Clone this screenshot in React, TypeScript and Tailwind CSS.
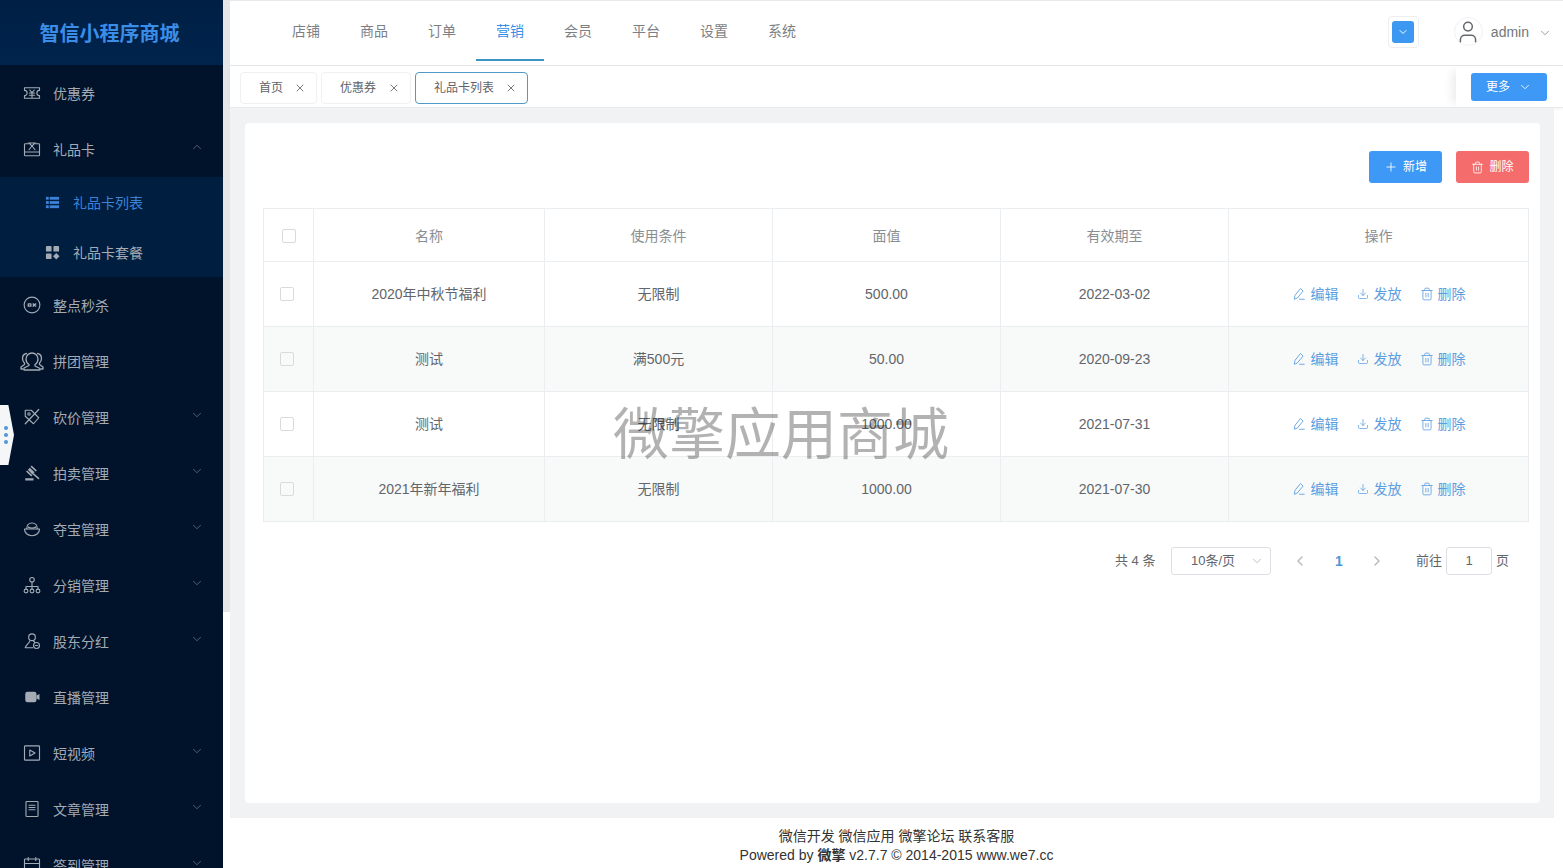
import React from 'react';
import { ChevronDown, ChevronUp, ChevronLeft, ChevronRight, X, Plus, Trash2, Download, User } from 'lucide-react';

type IconProps = { className?: string };

const base = {
  viewBox: '0 0 24 24',
  fill: 'none',
  stroke: 'currentColor',
  strokeWidth: 1.5,
  strokeLinecap: 'round' as const,
  strokeLinejoin: 'round' as const,
};

const CouponIcon = ({ className }: IconProps) => (
  <svg {...base} className={className}>
    <path d="M2 5h20v3.5a3.5 3.5 0 0 0 0 7V19H2v-3.5a3.5 3.5 0 0 0 0-7z" />
    <path d="M9 8l3 3.5L15 8M8.5 12h7M8.5 15h7M12 11.5V18" />
  </svg>
);
const GiftCardIcon = ({ className }: IconProps) => (
  <svg {...base} className={className}>
    <path d="M7 5H3a1 1 0 0 0-1 1v14a1 1 0 0 0 1 1h18a1 1 0 0 0 1-1V6a1 1 0 0 0-1-1h-4" />
    <path d="M2 16h20M7 4h10M8 4l4 4 4-4M12 8l-4 5M12 8l4 5" />
  </svg>
);
const ListIcon = ({ className }: IconProps) => (
  <svg viewBox="0 0 16 16" fill="currentColor" className={className}>
    <rect x="1" y="2" width="3" height="3" />
    <rect x="5" y="2" width="10" height="3" />
    <rect x="1" y="6.5" width="3" height="3" />
    <rect x="5" y="6.5" width="10" height="3" />
    <rect x="1" y="11" width="3" height="3" />
    <rect x="5" y="11" width="10" height="3" />
  </svg>
);
const PackageIcon = ({ className }: IconProps) => (
  <svg viewBox="0 0 16 16" fill="currentColor" className={className}>
    <rect x="1" y="1" width="6" height="6" rx="1" />
    <rect x="9" y="1" width="6" height="6" rx="1" />
    <rect x="1" y="9" width="6" height="6" rx="1" />
    <path d="M12 8.5l3.5 3.5-3.5 3.5L8.5 12z" />
  </svg>
);
const SeckillIcon = ({ className }: IconProps) => (
  <svg {...base} className={className}>
    <circle cx="12" cy="12" r="10.5" />
    <path d="M7 10.5h3.5v3H7zM13.5 10.5l3.5 3M17 10.5l-3.5 3" strokeWidth={1.8} />
  </svg>
);
const GroupIcon = ({ className }: IconProps) => (
  <svg {...base} strokeWidth={1.3} className={className}>
    <path d="M9 15.5c-2-1.2-3-3.2-3-5.5 0-3.300 2.700-6 6-6s6 2.700 6 6c0 2.300-1 4.300-3 5.500v1.500l5 2.500v1.500H4V19l5-2.500z" />
    <path d="M6.500 4.500C4 5 2.500 7 2.500 9.500c0 2 .8 3.500 2 4.500v1.500L1 18v2h2M17.500 4.500c2.500.5 4 2.500 4 5 0 2-.8 3.500-2 4.500v1.500L23 18v2h-2" />
  </svg>
);
const BargainIcon = ({ className }: IconProps) => (
  <svg {...base} className={className}>
    <path d="M3 3h8l10 10-7 8L3 11z" />
    <circle cx="8" cy="8" r="1.600" />
    <path d="M21 2L3 21" strokeWidth={1.600} />
  </svg>
);
const AuctionIcon = ({ className }: IconProps) => (
  <svg viewBox="0 0 24 24" fill="currentColor" className={className}>
    <path d="M11.500 2l7 6.500-1.500 1.500-7-6.500zM9 5l6.500 6-3 3-6-6.500zM5.500 8.500l7 6.500-1.500 1.500-7-6.500z" />
    <path d="M14 12l8 7-1.200 1.500-8-7z" />
    <rect x="3" y="19" width="11" height="3" />
  </svg>
);
const TreasureIcon = ({ className }: IconProps) => (
  <svg {...base} className={className}>
    <path d="M2 12h20c0 5-4 9-10 9S2 17 2 12z" />
    <path d="M5 12c0-5 3-8 7-8s7 3 7 8" />
    <path d="M7 9.500c3 1.500 7 1.500 10 0" />
  </svg>
);
const DistributionIcon = ({ className }: IconProps) => (
  <svg {...base} className={className}>
    <circle cx="12" cy="5" r="3" />
    <circle cx="4" cy="20" r="2.500" />
    <circle cx="12" cy="20" r="2.500" />
    <circle cx="20" cy="20" r="2.500" />
    <path d="M12 8v9.500M4 17.500V14h16v3.500" />
  </svg>
);
const ShareholderIcon = ({ className }: IconProps) => (
  <svg {...base} className={className}>
    <circle cx="12" cy="7" r="4.500" />
    <path d="M9 12c-.5 3-5 5-6 9h10" />
    <path d="M14 12l2 2" />
    <circle cx="18" cy="18" r="4" />
    <path d="M16.500 18h3" />
  </svg>
);
const VideoIcon = ({ className }: IconProps) => (
  <svg viewBox="0 0 24 24" fill="currentColor" className={className}>
    <rect x="3" y="5" width="15" height="14" rx="3" />
    <path d="M18 10l4-2v8l-4-2z" />
  </svg>
);
const PlayBoxIcon = ({ className }: IconProps) => (
  <svg {...base} className={className}>
    <rect x="2" y="2.500" width="20" height="19" rx="1" />
    <path d="M9 8l7 4-7 4z" />
  </svg>
);
const ArticleIcon = ({ className }: IconProps) => (
  <svg {...base} className={className}>
    <rect x="4" y="2" width="16" height="20" rx="1" />
    <path d="M8 7h8M8 10h8M8 13h8" />
  </svg>
);
const CalendarIcon = ({ className }: IconProps) => (
  <svg {...base} className={className}>
    <rect x="2" y="4" width="20" height="18" rx="1" />
    <path d="M2 10h20M7 2v4M17 2v4" />
  </svg>
);
const EditIcon = ({ className }: IconProps) => (
  <svg {...base} className={className}>
    <path d="M15 3l4 4L9 19l-5 2 1-6z" />
    <path d="M13 21h8" />
  </svg>
);

const menu = [
  { label: '优惠券', icon: CouponIcon },
  { label: '礼品卡', icon: GiftCardIcon, open: true },
  { label: '整点秒杀', icon: SeckillIcon },
  { label: '拼团管理', icon: GroupIcon, big: true },
  { label: '砍价管理', icon: BargainIcon, arrow: true },
  { label: '拍卖管理', icon: AuctionIcon, arrow: true },
  { label: '夺宝管理', icon: TreasureIcon, arrow: true },
  { label: '分销管理', icon: DistributionIcon, arrow: true },
  { label: '股东分红', icon: ShareholderIcon, arrow: true },
  { label: '直播管理', icon: VideoIcon },
  { label: '短视频', icon: PlayBoxIcon, arrow: true },
  { label: '文章管理', icon: ArticleIcon, arrow: true },
  { label: '签到管理', icon: CalendarIcon, arrow: true },
];

const navs = ['店铺', '商品', '订单', '营销', '会员', '平台', '设置', '系统'];

const rows = [
  { name: '2020年中秋节福利', cond: '无限制', value: '500.00', date: '2022-03-02' },
  { name: '测试', cond: '满500元', value: '50.00', date: '2020-09-23' },
  { name: '测试', cond: '无限制', value: '1000.00', date: '2021-07-31' },
  { name: '2021年新年福利', cond: '无限制', value: '1000.00', date: '2021-07-30' },
];

function Sidebar() {
  return (
    <aside className="w-[223px] h-[868px] shrink-0 bg-[#00132b] overflow-hidden">
      <div className="h-[65px] bg-gradient-to-b from-[#001f44] to-[#00244d] flex items-center justify-center pr-1 pt-[2px] text-[20px] font-bold text-[#3b8ee8]">
        智信小程序商城
      </div>
      {menu.map((item) => {
        const Icon = item.icon;
        return (
          <div key={item.label}>
            <div className="h-14 flex items-center text-sm text-[#a4abb5]">
              <div className="w-[18px] ml-[23px] mr-3 flex justify-center shrink-0">
                <Icon className={item.big ? 'w-6 h-6 shrink-0' : 'w-[18px] h-[18px] shrink-0'} />
              </div>
              <span className="flex-1 pt-px">{item.label}</span>
              {item.arrow && <ChevronDown className="w-[14px] h-[14px] mr-[19px] mb-1 text-[#5f6a7a]" strokeWidth={1.5} />}
              {item.open && <ChevronUp className="w-[14px] h-[14px] mr-[19px] mb-1 text-[#5f6a7a]" strokeWidth={1.5} />}
            </div>
            {item.open && (
              <div className="bg-[#001f40] text-sm">
                <div className="h-[50px] flex items-center pl-[45px] gap-[13px] text-[#3b82d8]">
                  <ListIcon className="w-[15px] h-[15px]" />
                  <span className="pt-px">礼品卡列表</span>
                </div>
                <div className="h-[50px] flex items-center pl-[45px] gap-[13px] text-[#a4abb5]">
                  <PackageIcon className="w-[15px] h-[15px]" />
                  <span className="pt-px">礼品卡套餐</span>
                </div>
              </div>
            )}
          </div>
        );
      })}
    </aside>
  );
}

function TopBar() {
  return (
    <header className="h-[66px] border-t border-b border-[#e6e8ea] bg-white flex items-center">
      <nav className="flex pl-[42px] h-full flex-1">
        {navs.map((n) => (
          <div
            key={n}
            className={
              n === '营销'
                ? 'w-[68px] h-[60px] flex items-center justify-center pt-[2px] text-sm text-[#3a8ee6] border-b-2 border-[#3a94c4]'
                : 'w-[68px] h-[60px] flex items-center justify-center text-sm text-[#7c7f84]'
            }
          >
            {n}
          </div>
        ))}
      </nav>
      <div className="w-[31px] h-[32px] border border-[#eceef0] rounded flex items-center justify-center mr-[35px] mb-[3px]">
        <div className="w-[22px] h-[22px] rounded-[3px] bg-[#3d98f2] flex items-center justify-center">
          <ChevronDown className="w-3 h-3 text-white" />
        </div>
      </div>
      <div className="w-[29px] h-[29px] rounded-full border border-[#f0f1f2] flex items-center justify-center mb-[3px]">
        <User className="w-[26px] h-[26px] text-[#666a70]" strokeWidth={1.4} />
      </div>
      <span className="text-sm text-[#73777c] ml-2 mb-[2px]">admin</span>
      <ChevronDown className="w-[14px] h-[14px] text-[#8a8d91] ml-[9px] mr-[11px]" strokeWidth={1.5} />
    </header>
  );
}

function TabBar() {
  return (
    <div className="h-[42px] bg-white flex items-center border-b border-[#e8eaec] shadow-[0_1px_3px_rgba(0,0,0,0.06)]">
      <div className="flex-1 flex gap-1 pl-[10px] pt-[2px] text-xs text-[#5f6368]">
        <div className="w-[77px] h-8 border border-[#eef0f2] rounded flex items-center pl-[18px]">
          <span className="w-[35px]">首页</span>
          <X className="w-3 h-3 text-[#777b80]" />
        </div>
        <div className="w-[90px] h-8 border border-[#eef0f2] rounded flex items-center pl-[18px]">
          <span className="w-[48px]">优惠券</span>
          <X className="w-3 h-3 text-[#777b80]" />
        </div>
        <div className="w-[113px] h-8 border border-[#4f9ac7] rounded flex items-center pl-[18px]">
          <span className="w-[71px]">礼品卡列表</span>
          <X className="w-3 h-3 text-[#777b80]" />
        </div>
      </div>
      <div className="w-[107px] h-[40px] bg-white flex items-center shadow-[-8px_0_10px_-4px_rgba(0,0,0,0.08)] pl-[15px]">
        <button className="w-[76px] h-7 bg-[#3d98f6] rounded-[3px] text-white text-xs flex items-center justify-center gap-[8px]">
          更多
          <ChevronDown className="w-[14px] h-[14px]" strokeWidth={1.5} />
        </button>
      </div>
    </div>
  );
}

function Actions() {
  return (
    <div className="flex items-center justify-center gap-[18px] text-sm text-[#5b9ee0]">
      <span className="flex items-center gap-[5px]"><EditIcon className="w-[14px] h-[14px]" />编辑</span>
      <span className="flex items-center gap-[5px]"><Download className="w-3 h-3" strokeWidth={1.5} />发放</span>
      <span className="flex items-center gap-[4px]"><Trash2 className="w-[14px] h-[14px]" strokeWidth={1.4} />删除</span>
    </div>
  );
}

function GiftTable() {
  const cell = 'border border-[#ebeef0] text-center text-sm';
  return (
    <table className="w-[1265px] table-fixed border-collapse">
      <colgroup>
        <col className="w-[50px]" />
        <col className="w-[231px]" />
        <col className="w-[228px]" />
        <col className="w-[228px]" />
        <col className="w-[228px]" />
        <col className="w-[300px]" />
      </colgroup>
      <thead>
        <tr className="h-[53px] text-[#8a8e93]">
          <th className={`${cell} font-normal pt-px`}>
            <div className="w-[14px] h-[14px] border border-[#d8dbde] rounded-[2px] ml-[18px]" />
          </th>
          <th className={`${cell} font-normal pt-px`}>名称</th>
          <th className={`${cell} font-normal pt-px`}>使用条件</th>
          <th className={`${cell} font-normal pt-px`}>面值</th>
          <th className={`${cell} font-normal pt-px`}>有效期至</th>
          <th className={`${cell} font-normal pt-px`}>操作</th>
        </tr>
      </thead>
      <tbody>
        {rows.map((r, i) => (
          <tr key={i} className={i % 2 === 1 ? 'h-[65px] bg-[#f8f9f9] text-[#62666b]' : 'h-[65px] text-[#62666b]'}>
            <td className={cell}>
              <div className="w-[14px] h-[14px] border border-[#d8dbde] rounded-[2px] ml-[16px]" />
            </td>
            <td className={cell}>{r.name}</td>
            <td className={cell}>{r.cond}</td>
            <td className={cell}>{r.value}</td>
            <td className={cell}>{r.date}</td>
            <td className={cell}><Actions /></td>
          </tr>
        ))}
      </tbody>
    </table>
  );
}

function Pager() {
  return (
    <div className="flex items-center mt-[25px] h-7 text-[13px] text-[#62666b] pl-[852px]">
      <span className="w-[56px]">共 4 条</span>
      <div className="w-[100px] h-7 border border-[#dcdfe3] rounded-[3px] flex items-center pl-[19px] pr-[6px] justify-between">
        <span>10条/页</span>
        <ChevronDown className="w-[14px] h-[14px] text-[#b4b8bd]" strokeWidth={1.5} />
      </div>
      <ChevronLeft className="w-4 h-4 text-[#b4b8bd] ml-[21px]" />
      <span className="font-bold text-sm text-[#4f97d6] ml-[27px] w-[8px]">1</span>
      <ChevronRight className="w-4 h-4 text-[#b4b8bd] ml-[26px]" />
      <span className="ml-[31px]">前往</span>
      <div className="w-[46px] h-7 border border-[#dcdfe3] rounded-[3px] flex items-center justify-center ml-1">1</div>
      <span className="ml-1">页</span>
    </div>
  );
}

export default function App() {
  return (
    <div className="w-[1563px] h-[868px] overflow-hidden flex relative bg-white font-['Liberation_Sans','Noto_Sans_CJK_SC',sans-serif]">
      <Sidebar />
      <div className="w-[7px] shrink-0">
        <div className="h-[612px] bg-[#e4e6e8]" />
      </div>
      <main className="flex-1 min-w-0 flex flex-col">
        <TopBar />
        <TabBar />
        <div className="h-[710px] bg-[#f0f2f3] mr-[9px] pt-[15px] pl-[15px] pr-[14px]">
          <section className="h-[680px] bg-white rounded pt-[28px] pl-[18px]">
            <div className="flex justify-end gap-[14px] pr-[11px] mb-[25px]">
              <button className="w-[73px] h-8 bg-[#3d98f6] rounded-[3px] text-white text-xs flex items-center justify-center gap-[5px]">
                <Plus className="w-[14px] h-[14px]" strokeWidth={1.5} />新增
              </button>
              <button className="w-[73px] h-8 bg-[#f56c6c] rounded-[3px] text-white text-xs flex items-center justify-center gap-[5px]">
                <Trash2 className="w-[13px] h-[13px]" strokeWidth={1.5} />删除
              </button>
            </div>
            <GiftTable />
            <Pager />
          </section>
        </div>
        <footer className="pt-[9px] text-center text-sm leading-[19px] text-[#333]">
          <div>微信开发 微信应用 微擎论坛 联系客服</div>
          <div>Powered by <b>微擎</b> v2.7.7 © 2014-2015 www.we7.cc</div>
        </footer>
      </main>

      {/* watermark */}
      <div className="absolute left-[613px] top-[399px] text-[56px] leading-[72px] text-black/30 whitespace-nowrap pointer-events-none">
        微擎应用商城
      </div>
      {/* floating side handle */}
      <div className="absolute left-0 top-[405px] w-[14px] h-[60px] bg-[#f4f6f8] [clip-path:polygon(0_0,60%_0,100%_50%,60%_100%,0_100%)] flex flex-col items-center justify-center gap-[3px] pr-[3px]">
        <div className="w-1 h-1 rounded-full bg-[#4f97d6]" />
        <div className="w-1 h-1 rounded-full bg-[#4f97d6]" />
        <div className="w-1 h-1 rounded-full bg-[#4f97d6]" />
      </div>
    </div>
  );
}
